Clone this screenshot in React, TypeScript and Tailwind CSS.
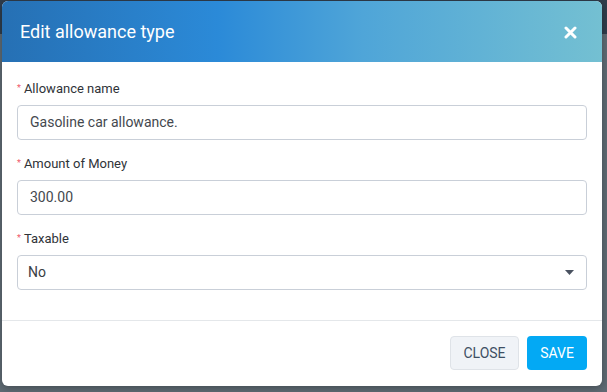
import React from "react";

function Field({ label, children }: { label: string; children: React.ReactNode }) {
  return (
    <div className="mb-[15px]">
      <div className="flex items-center h-[18px] mb-[7px] text-[13px] text-[#2f3338] leading-[18px]">
        <span className="text-[#ef5b6b] text-[9px] mr-[3px] leading-none -mt-[2px]">*</span>
        <span>{label}</span>
      </div>
      {children}
    </div>
  );
}

export default function App() {
  return (
    <div
      className="w-[607px] h-[392px] overflow-hidden bg-[linear-gradient(to_bottom,#2f3d4c_0px,#2f3d4c_34px,#5f6b74_34px,#5f6b74_100%)] pt-[1px] pl-[2px]"
      style={{ fontFamily: "Roboto, 'Noto Sans', sans-serif" }}
    >
      <div className="w-[600px] h-[385px] bg-white rounded-[6px] overflow-hidden flex flex-col shadow-[0_2px_8px_rgba(0,0,0,0.3)]">
        <div className="h-[61px] shrink-0 flex items-center justify-between pl-[18px] pr-[25px] bg-[linear-gradient(to_right,#2670b4_0%,#2b8ad8_36%,#4fa5d8_60%,#74c0d2_100%)]">
          <span className="text-white text-[18px] leading-none">Edit allowance type</span>
          <svg width="13" height="13" viewBox="0 0 13 13" className="mt-[1px]">
            <path d="M2 2 L11 11 M11 2 L2 11" stroke="white" strokeWidth="3" strokeLinecap="round" />
          </svg>
        </div>
        <div className="px-[15px] pt-[18px] h-[259px] shrink-0 border-b border-[#e4e7ea]">
          <Field label="Allowance name">
            <div className="h-[35px] border border-[#c9cfd8] rounded-[4px] flex items-center px-[12px] text-[14px] text-[#44484e]">
              Gasoline car allowance.
            </div>
          </Field>
          <Field label="Amount of Money">
            <div className="h-[35px] border border-[#c9cfd8] rounded-[4px] flex items-center px-[12px] text-[14px] text-[#44484e]">
              300.00
            </div>
          </Field>
          <Field label="Taxable">
            <div className="h-[35px] border border-[#c9cfd8] rounded-[4px] flex items-center justify-between pl-[10px] pr-[12px] text-[14px] text-[#3a3e44]">
              <span>No</span>
              <svg width="9" height="5" viewBox="0 0 9 5">
                <path d="M0 0 L9 0 L4.5 5 Z" fill="#4a5260" />
              </svg>
            </div>
          </Field>
        </div>
        <div className="flex justify-end gap-[8px] px-[15px] pt-[15px]">
          <button className="h-[34px] w-[69px] rounded-[4px] bg-[#f0f3f7] border border-[#dfe3e8] text-[14px] text-[#3e4f63]">
            CLOSE
          </button>
          <button className="h-[34px] w-[60px] rounded-[4px] bg-[#03a9f4] text-[14px] text-white">
            SAVE
          </button>
        </div>
      </div>
    </div>
  );
}
